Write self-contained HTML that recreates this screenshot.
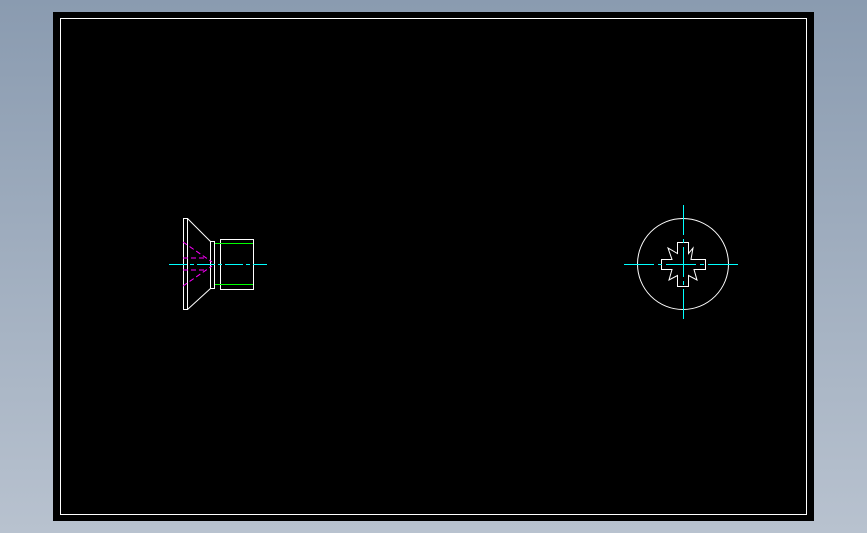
<!DOCTYPE html><html><head><style>body{margin:0;width:867px;height:533px;overflow:hidden;background:linear-gradient(#8a9bb0,#b8c2cf)}</style></head><body>
<svg width="867" height="533" style="position:absolute;left:0;top:0">
<rect x="53" y="12" width="761" height="509" fill="#000"/>
<rect x="60.5" y="18.5" width="746" height="496" fill="none" stroke="#fff" stroke-width="1"/>
<g fill="none" stroke="#fff" stroke-width="1">
<rect x="183.5" y="218.5" width="4" height="91"/>
<path d="M187.5 218.5L210.5 241.5M187.5 309.5L210.5 288.5"/>
<rect x="210.5" y="241.5" width="4" height="47"/>
<rect x="220.5" y="239.5" width="33" height="50"/>
<circle cx="683" cy="264" r="45.5"/>
<path d="M677.5 253.5V242.5H688.5V253.5L693 248L691 259.5H705.5V269.5H694L697 280L688.5 275.5V286.5H677.5V275.5L669 280L672 269.5H661.5V259.5H672L668 248Z"/>
</g>
<path d="M215 243.5H253M215 284.5H253" stroke="#0f0"/>
<path d="M183 242L212 262M183 286L212 266M183 258H205M183 270H205" stroke="#f0f" stroke-dasharray="5,3"/>
<path d="M169 264.5H267" stroke="#0ff" stroke-dasharray="18,3,4,3"/>
<path d="M624 264.5H742M683.5 205V323" stroke="#0ff" stroke-dasharray="30,4,4,4"/>
</svg></body></html>
